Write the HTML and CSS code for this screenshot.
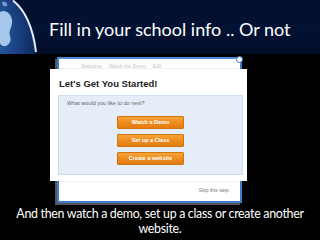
FILE: index.html
```html
<!DOCTYPE html>
<html>
<head>
<meta charset="utf-8">
<link rel="stylesheet" href="styles.css">
</head>
<body>
<div class="slide">
  <header class="head">
    <svg class="globe" width="40" height="54" viewBox="0 0 40 54">
      <defs>
        <radialGradient id="g" cx="0.35" cy="0.4" r="0.65">
          <stop offset="0" stop-color="#5b90d2"/>
          <stop offset="0.6" stop-color="#24559c"/>
          <stop offset="1" stop-color="#0d2a60"/>
        </radialGradient>
      </defs>
      <circle cx="-30" cy="50" r="66" fill="url(#g)"/>
      <path d="M0 12 C5 9 11 13 12 20 C13 27 8 30 10 36 C12 42 8 47 3 46 C1 45 0 44 0 43 Z" fill="#b5d4f4" opacity="0.9"/>
      <path d="M2 2 C5 1 8 3 7 6 C5 7 2 6 2 2 Z" fill="#9fc3ec" opacity="0.7"/>
      <path d="M13 0.5 C25 10 33 28 36 52" fill="none" stroke="#eef5ff" stroke-width="2" opacity="0.95"/>
    </svg>
    <h1 class="title">Fill in your school info .. Or not</h1>
  </header>
  <main class="stage">
    <div class="frame">
      <div class="bgrow">Welcome &nbsp;&nbsp;&nbsp; Watch the Demo &nbsp;&nbsp;&nbsp; Edit</div>
      <span class="close"></span>
      <div class="dialog">
        <div class="dtitle">Let's Get You Started!</div>
        <div class="panel">
          <div class="q">What would you like to do next?</div>
          <div class="btns">
            <div class="btn">Watch a Demo</div>
            <div class="btn">Set up a Class</div>
            <div class="btn">Create a website</div>
          </div>
        </div>
      </div>
      <div class="foot">
        <div class="rule"></div>
        <div class="skip">Skip this step.</div>
      </div>
    </div>
  </main>
  <p class="caption">And then watch a demo, set up a class or create another website.</p>
</div>
</body>
</html>
```
FILE: styles.css
```css
html, body {
  margin: 0;
  padding: 0;
  background: #000;
}
.slide {
  width: 320px;
  height: 240px;
  overflow: hidden;
  background: #000;
  display: flex;
  flex-direction: column;
}
.head {
  height: 54px;
  background: linear-gradient(180deg, #02102e 0%, #031233 60%, #020d27 100%);
  display: flex;
  align-items: center;
  gap: 9px;
}
.globe {
  flex: none;
  display: block;
}
.title {
  margin: 0;
  font-family: Lato, "Open Sans", sans-serif;
  font-weight: 400;
  font-size: 18px;
  color: #fff;
  padding-top: 3px;
}
.stage {
  height: 149px;
  padding-top: 3px;
  box-sizing: border-box;
}
.frame {
  position: relative;
  margin-left: 57px;
  width: 181px;
  height: 142px;
  border: 2px solid #3a7ccf;
  border-top-color: #4d8ad8;
  background: #fff;
  box-shadow: -2px 2px 0 #555;
  display: flex;
  flex-direction: column;
}
.bgrow {
  font-family: "Liberation Sans", Arial, sans-serif;
  font-size: 5px;
  color: #c4c4c4;
  padding: 4px 0 0 22px;
  height: 8px;
}
.close {
  position: absolute;
  right: -3px;
  top: -3px;
  width: 5px;
  height: 5px;
  border-radius: 50%;
  background: #fff;
  border: 1.5px solid #2f6fc6;
}
.dialog {
  position: absolute;
  left: -9px;
  top: 10px;
  width: 197px;
  height: 112px;
  background: #fff;
  box-shadow: 0 0 1px rgba(0,0,0,0.3);
  box-sizing: border-box;
  padding: 9px 0 0 9px;
}
.dtitle {
  font-family: "Liberation Sans", Arial, sans-serif;
  font-weight: 700;
  font-size: 9.5px;
  line-height: 11px;
  color: #222;
}
.panel {
  margin: 6px 0 0 -1px;
  width: 185px;
  height: 80px;
  box-sizing: border-box;
  background: #e5eef8;
  border: 1px solid #cddcec;
  padding: 4px 0 0 8px;
}
.q {
  font-family: "Liberation Sans", Arial, sans-serif;
  font-size: 5.5px;
  line-height: 7px;
  color: #666;
}
.btns {
  margin: 9px 0 0 50px;
  display: flex;
  flex-direction: column;
  gap: 5px;
}
.btn {
  width: 67px;
  height: 13px;
  box-sizing: border-box;
  border-radius: 1px;
  background: linear-gradient(180deg, #f6a43a 0%, #ec8a1c 55%, #e27c12 100%);
  border: 1px solid #d2740e;
  color: #fff;
  font-family: "Liberation Sans", Arial, sans-serif;
  font-weight: 700;
  font-size: 5.5px;
  line-height: 11px;
  text-align: center;
}
.foot {
  margin-top: auto;
  padding: 0 2px 8px 8px;
}
.rule {
  height: 1px;
  background: #dfe6ee;
}
.skip {
  text-align: right;
  font-family: "Liberation Sans", Arial, sans-serif;
  font-size: 5px;
  color: #777;
  margin-top: 6px;
  padding-right: 8px;
}
.caption {
  margin: 0;
  padding: 3px 2px 0;
  font-family: Lato, "Open Sans", sans-serif;
  font-size: 12.4px;
  letter-spacing: -0.3px;
  line-height: 15px;
  color: #fff;
  text-align: center;
}
```
